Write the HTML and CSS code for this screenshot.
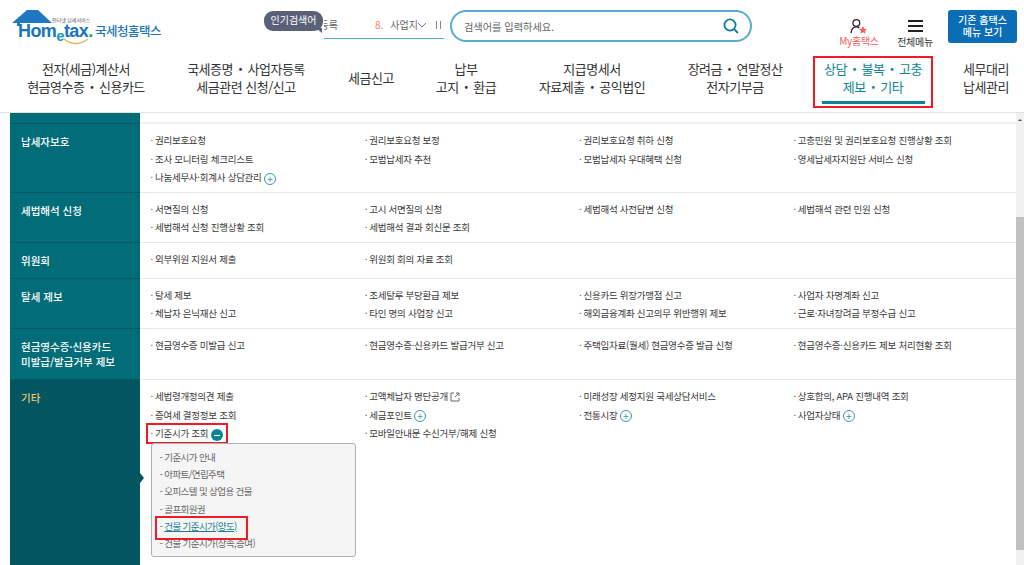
FILE: index.html
```html
<!DOCTYPE html>
<html lang="ko">
<head>
  <title>Hometax 국세청홈택스</title>
  <meta charset="UTF-8">
  <link rel="stylesheet" href="styles.css">
</head>
<body>
  <header class="header">
    <div class="top-bar">
      <a class="logo">
        <span class="logo-mark">
          <svg class="logo-roof" width="40" height="16" viewBox="0 0 40 16">
            <path d="M0 13 L15 0 H26 L40 13 H8 V16 H5 V13 Z" fill="#1f78c1"/>
          </svg>
          <span class="logo-tag">인터넷 납세서비스</span>
          <span class="logo-word">Hom<span class="logo-e">e</span>tax<span class="logo-dot">.</span></span>
          <svg class="logo-smile" width="26" height="7" viewBox="0 0 26 7">
            <path d="M1 1 C8 7 17 7 25 1" fill="none" stroke="#e0b25c" stroke-width="1.3"/>
          </svg>
        </span>
        <span class="logo-name">국세청홈택스</span>
      </a>
      <div class="ticker">
        <span class="ticker-badge">인기검색어</span>
        <span class="ticker-prev">등록</span>
        <span class="ticker-num">8.</span>
        <span class="ticker-word">사업지</span>
        <svg width="10" height="6" viewBox="0 0 10 6"><path d="M1 1 L5 5 L9 1" fill="none" stroke="#777" stroke-width="1"/></svg>
        <span class="ticker-pause"></span>
      </div>
      <div class="search">
        <span class="search-text">검색어를 입력하세요.</span>
        <svg width="16" height="16" viewBox="0 0 16 16"><circle cx="7" cy="7" r="5.6" fill="none" stroke="#0d7f93" stroke-width="1.8"/><path d="M11 11 L15 15" stroke="#0d7f93" stroke-width="1.8"/></svg>
      </div>
      <a class="tool tool-my">
        <svg width="18" height="16" viewBox="0 0 20 18">
          <circle cx="7" cy="5.5" r="3.8" fill="none" stroke="#222" stroke-width="1.4"/>
          <path d="M1 17 C1.5 12 4 10 7 10 C8.5 10 9.5 10.4 10.5 11.2" fill="none" stroke="#222" stroke-width="1.4"/>
          <path d="M14.5 9 L16 12 L19 12.4 L16.8 14.4 L17.4 17.4 L14.5 16 L11.6 17.4 L12.2 14.4 L10 12.4 L13 12 Z" fill="#f0625f"/>
        </svg>
        <span>My홈택스</span>
      </a>
      <a class="tool tool-menu">
        <span class="burger"><i></i><i></i><i></i></span>
        <span>전체메뉴</span>
      </a>
      <a class="old-menu">기존 홈택스<br>메뉴 보기</a>
    </div>
    <nav class="nav">
      <a class="nav-item w1"><span class="nav-text">전자(세금)계산서<br>현금영수증<i class="dot">・</i>신용카드</span></a>
      <a class="nav-item w2"><span class="nav-text">국세증명<i class="dot">・</i>사업자등록<br>세금관련 신청/신고</span></a>
      <a class="nav-item w3"><span class="nav-text">세금신고</span></a>
      <a class="nav-item w4"><span class="nav-text">납부<br>고지<i class="dot">・</i>환급</span></a>
      <a class="nav-item w5"><span class="nav-text">지급명세서<br>자료제출<i class="dot">・</i>공익법인</span></a>
      <a class="nav-item w6"><span class="nav-text">장려금<i class="dot">・</i>연말정산<br>전자기부금</span></a>
      <a class="nav-item w7 active"><span class="nav-text">상담<i class="dot">・</i>불복<i class="dot">・</i>고충<br>제보<i class="dot">・</i>기타</span></a>
      <a class="nav-item w8"><span class="nav-text">세무대리<br>납세관리</span></a>
    </nav>
  </header>

  <div class="page">
    <main class="content">
      <div class="row row-top">
        <div class="side"></div>
        <div class="links"></div>
      </div>

      <div class="row">
        <div class="side">납세자보호</div>
        <ul class="links">
          <li>권리보호요청</li>
          <li>권리보호요청 보정</li>
          <li>권리보호요청 취하 신청</li>
          <li>고충민원 및 권리보호요청 진행상황 조회</li>
          <li>조사 모니터링 체크리스트</li>
          <li>모범납세자 추천</li>
          <li>모범납세자 우대혜택 신청</li>
          <li>영세납세자지원단 서비스 신청</li>
          <li>나눔세무사·회계사 상담관리 <span class="plus">+</span></li>
        </ul>
      </div>

      <div class="row">
        <div class="side">세법해석 신청</div>
        <ul class="links">
          <li>서면질의 신청</li>
          <li>고시 서면질의 신청</li>
          <li>세법해석 사전답변 신청</li>
          <li>세법해석 관련 민원 신청</li>
          <li>세법해석 신청 진행상황 조회</li>
          <li>세법해석 결과 회신문 조회</li>
        </ul>
      </div>

      <div class="row">
        <div class="side">위원회</div>
        <ul class="links">
          <li>외부위원 지원서 제출</li>
          <li>위원회 회의 자료 조회</li>
        </ul>
      </div>

      <div class="row">
        <div class="side">탈세 제보</div>
        <ul class="links">
          <li>탈세 제보</li>
          <li>조세탈루 부당환급 제보</li>
          <li>신용카드 위장가맹점 신고</li>
          <li>사업자 차명계좌 신고</li>
          <li>체납자 은닉재산 신고</li>
          <li>타인 명의 사업장 신고</li>
          <li>해외금융계좌 신고의무 위반행위 제보</li>
          <li>근로·자녀장려금 부정수급 신고</li>
        </ul>
      </div>

      <div class="row">
        <div class="side">현금영수증·신용카드<br>미발급/발급거부 제보</div>
        <ul class="links">
          <li>현금영수증 미발급 신고</li>
          <li>현금영수증·신용카드 발급거부 신고</li>
          <li>주택임차료(월세) 현금영수증 발급 신청</li>
          <li>현금영수증·신용카드 제보 처리현황 조회</li>
        </ul>
      </div>

      <div class="row row-last">
        <div class="side side-active">기타<span class="side-arrow"></span></div>
        <ul class="links">
          <li>세법령개정의견 제출</li>
          <li>고액체납자 명단공개
            <svg class="ext" width="10" height="10" viewBox="0 0 10 10"><path d="M4 1 H1 V9 H9 V6 M5 5 L9 1 M6 1 H9 V4" fill="none" stroke="#555" stroke-width="0.9"/></svg>
          </li>
          <li>미래성장 세정지원 국세상담서비스</li>
          <li>상호합의, APA 진행내역 조회</li>
          <li>증여세 결정정보 조회</li>
          <li>세금포인트 <span class="plus">+</span></li>
          <li>전통시장 <span class="plus">+</span></li>
          <li>사업자상태 <span class="plus">+</span></li>
          <li class="open">기준시가 조회 <span class="minus"></span></li>
          <li>모바일안내문 수신거부/해제 신청</li>
          <li class="sub-wrap">
            <ul class="sub">
              <li>기준시가 안내</li>
              <li>아파트/연립주택</li>
              <li>오피스텔 및 상업용 건물</li>
              <li>골프회원권</li>
              <li class="sub-on"><a>건물 기준시가(양도)</a></li>
              <li>건물 기준시가(상속,증여)</li>
            </ul>
          </li>
        </ul>
      </div>
    </main>
    <div class="scrollbar">
      <span class="scroll-up"></span>
      <span class="scroll-thumb"></span>
    </div>
  </div>
</body>
</html>
```

FILE: styles.css
```css
* {
  box-sizing: border-box;
}

html, body {
  height: 100%;
}

body {
  margin: 0;
  overflow: hidden;
  background-color: #ffffff;
  color: #333333;
  font-family: "Noto Sans CJK KR", "Noto Sans", sans-serif;
  font-size: 10px;
}

ul {
  list-style: none;
  margin: 0;
  padding: 0;
}

.header {
  height: 113px;
  border-bottom: 1px solid #e2e2e2;
}

.top-bar {
  display: flex;
  align-items: flex-start;
  height: 50px;
}

/* logo */
.logo {
  display: flex;
  align-items: flex-start;
  width: 264px;
  padding: 10px 0 0 12px;
}

.logo-mark {
  position: relative;
  display: block;
  flex: none;
  width: 83px;
  height: 36px;
}

.logo-roof {
  position: absolute;
  left: 0;
  top: 0;
}

.logo-tag {
  position: absolute;
  left: 40px;
  top: 6px;
  font-size: 5px;
  line-height: 7px;
  color: #555555;
  white-space: nowrap;
}

.logo-word {
  position: absolute;
  left: 6px;
  top: 10px;
  font-family: "Liberation Sans", sans-serif;
  font-size: 18px;
  line-height: 22px;
  font-weight: 700;
  letter-spacing: -0.6px;
  color: #1a74bd;
  white-space: nowrap;
}

.logo-e {
  position: relative;
  top: 4px;
  font-size: 15px;
  color: #1f9bc2;
}

.logo-dot {
  color: #2f9e57;
}

.logo-smile {
  position: absolute;
  left: 51px;
  top: 28px;
}

.logo-name {
  margin-top: 12px;
  font-size: 12.5px;
  line-height: 18px;
  font-weight: 500;
  letter-spacing: -0.5px;
  color: #1a74bd;
  white-space: nowrap;
}

/* ticker */
.ticker {
  position: relative;
  display: flex;
  align-items: center;
  width: 180px;
  height: 38px;
  margin-top: 1px;
  padding: 9px 0 0 60px;
  font-size: 10px;
  color: #666666;
  white-space: nowrap;
}

.ticker::after {
  content: "";
  position: absolute;
  left: 60px;
  right: 0;
  bottom: 0;
  height: 1px;
  background-color: #4fb3c4;
}

.ticker-badge {
  position: absolute;
  left: 0;
  top: 10px;
  width: 59px;
  height: 20px;
  border-radius: 9px;
  background-color: #5b6079;
  color: #ffffff;
  font-size: 10px;
  line-height: 18px;
  text-align: center;
}

.ticker-badge::after {
  content: "";
  position: absolute;
  right: 1px;
  bottom: -2px;
  border-top: 5px solid #5b6079;
  border-left: 6px solid transparent;
}

.ticker-prev {
  width: 14px;
  overflow: hidden;
  direction: rtl;
}

.ticker-num {
  margin-left: 37px;
  color: #f07a72;
}

.ticker-word {
  width: 27px;
  margin-left: 7px;
  overflow: hidden;
}

.ticker-pause {
  width: 5px;
  height: 8px;
  margin-left: 9px;
  border-left: 1px solid #888888;
  border-right: 1px solid #888888;
}

/* search */
.search {
  display: flex;
  align-items: center;
  justify-content: space-between;
  width: 302px;
  height: 32px;
  margin: 10px 0 0 6px;
  padding: 0 11px 0 12px;
  border: 2px solid #59abd0;
  border-radius: 16px;
}

.search-text {
  font-size: 10.2px;
  color: #666666;
}

/* my / menu / old menu */
.tool {
  display: flex;
  flex-direction: column;
  align-items: center;
  font-size: 10px;
  line-height: 12px;
  letter-spacing: -0.3px;
  white-space: nowrap;
}

.tool-my {
  width: 50px;
  margin: 18px 0 0 82px;
  gap: 1px;
  color: #f0625f;
}

.tool-menu {
  width: 44px;
  margin: 20px 0 0 9px;
  gap: 4px;
  color: #333333;
}

.burger {
  display: flex;
  flex-direction: column;
  gap: 3.5px;
  width: 15px;
}

.burger i {
  height: 1.5px;
  background-color: #222222;
}

.old-menu {
  width: 69px;
  height: 33px;
  margin: 10px 0 0 11px;
  padding-top: 4px;
  border-radius: 3px;
  background-color: #0a6db5;
  color: #ffffff;
  font-size: 10px;
  line-height: 12px;
  font-weight: 500;
  text-align: center;
}

/* main nav */
.nav {
  display: flex;
  align-items: flex-start;
  padding-top: 6px;
}

.nav-item {
  padding-top: 4px;
  font-size: 13px;
  line-height: 18px;
  letter-spacing: -0.5px;
  text-align: center;
  white-space: nowrap;
  color: #333333;
}

.nav-text {
  display: block;
  height: 36px;
}

.w3 .nav-text {
  line-height: 36px;
}

.dot {
  margin: 0 1px;
  font-style: normal;
}

.w1 { width: 172px; }
.w2 { width: 148px; }
.w3 { width: 102px; }
.w4 { width: 88px; }
.w5 { width: 164px; }
.w6 { width: 122px; }
.w7 { width: 120px; margin-left: 17px; }
.w8 { width: 64px; margin-left: 21px; }

.nav-item.active {
  height: 52px;
  padding-top: 2px;
  border: 2px solid #ee1c25;
  color: #0e8596;
}

.nav-item.active::after {
  content: "";
  display: block;
  width: 103px;
  height: 3px;
  margin: 5px auto 0;
  background-color: #0b8595;
}

/* content */
.page {
  display: flex;
  height: 452px;
}

.content {
  flex: 1;
  padding-left: 10px;
  overflow: hidden;
}

.row {
  display: flex;
}

.side {
  flex: none;
  width: 130px;
  padding: 10px 11px;
  border-bottom: 1px solid #065a66;
  background-color: #026d79;
  color: #ffffff;
  font-size: 10.5px;
  line-height: 15px;
  font-weight: 500;
  white-space: nowrap;
}

.side-active {
  position: relative;
  border-bottom: none;
  background-color: #035560;
  color: #ecc675;
}

.side-arrow {
  position: absolute;
  right: -4px;
  top: 93px;
  border-left: 4px solid #035560;
  border-top: 5px solid transparent;
  border-bottom: 5px solid transparent;
}

.links {
  flex: 1;
  display: grid;
  grid-template-columns: repeat(4, 214.3px);
  grid-auto-rows: min-content;
  padding: 7px 0 5px 10.5px;
  border-bottom: 1px solid #e8e8e8;
  color: #3a3a3a;
  font-size: 9.5px;
  line-height: 18.5px;
  letter-spacing: -0.25px;
  white-space: nowrap;
}

.links > li {
  height: 18.5px;
}

.links > li::before {
  content: "·";
  margin-right: 2px;
}

.row-top .side {
  height: 11.3px;
  padding: 0;
}

.row-top .links {
  padding: 0;
  border-bottom: 2px solid #f0f0f0;
}

.row-last {
  flex: 1;
  height: 185px;
}

.row-last .links {
  padding-top: 7.6px;
  border-bottom: none;
}

.plus, .minus {
  display: inline-block;
  width: 12px;
  height: 12px;
  border: 1px solid #3c97aa;
  border-radius: 50%;
  color: #3c97aa;
  font-size: 10px;
  line-height: 9px;
  text-align: center;
  letter-spacing: 0;
  vertical-align: middle;
}

.minus {
  position: relative;
  border: none;
  background-color: #0b8595;
}

.minus::after {
  content: "";
  position: absolute;
  left: 3px;
  right: 3px;
  top: 6px;
  height: 1px;
  background-color: #ffffff;
}

.ext {
  vertical-align: -2px;
}

.links > li.open {
  justify-self: start;
  margin-left: -4px;
  padding: 0 4px;
  outline: 2px solid #ee1c25;
  outline-offset: -1px;
}

.links > li.sub-wrap {
  grid-column: 1;
  height: auto;
}

.links > li.sub-wrap::before {
  content: none;
}

.sub {
  width: 205px;
  height: 114px;
  margin-top: 0;
  padding: 5px 8px;
  border: 1px solid #a9b3b8;
  border-radius: 3px;
  background-color: #f5f5f5;
  color: #666666;
  line-height: 17.2px;
  letter-spacing: -0.6px;
}

.sub li::before {
  content: "- ";
}

.sub-on {
  position: relative;
  color: #1b7f92;
}

.sub-on a {
  text-decoration: underline;
}

.sub-on::after {
  content: "";
  position: absolute;
  left: -5px;
  top: -2px;
  width: 89px;
  height: 20px;
  border: 2px solid #ee1c25;
}

/* scrollbar */
.scrollbar {
  position: relative;
  flex: none;
  width: 8px;
  background-color: #f1f1f1;
}

.scroll-up {
  position: absolute;
  left: 2px;
  top: 6px;
  border-left: 2px solid transparent;
  border-right: 2px solid transparent;
  border-bottom: 2px solid #555555;
}

.scroll-thumb {
  position: absolute;
  left: 0;
  right: 0;
  top: 104px;
  height: 333px;
  background-color: #c1c1c1;
}
```
